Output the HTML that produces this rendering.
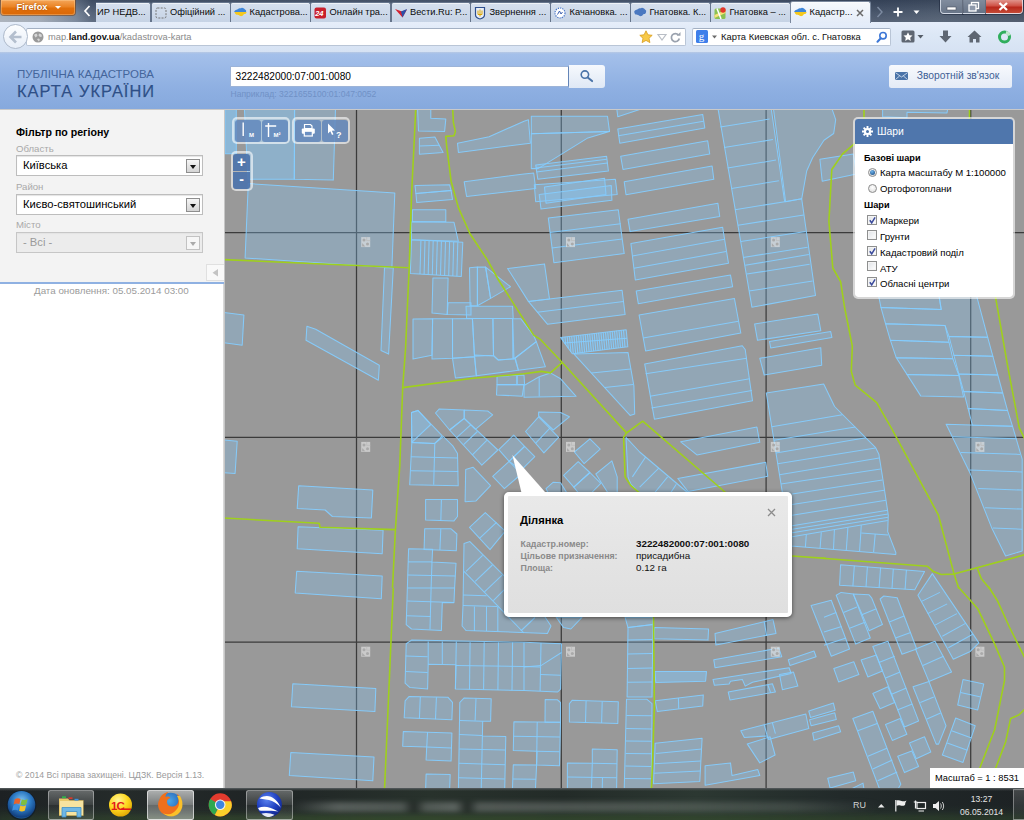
<!DOCTYPE html>
<html lang="uk">
<head>
<meta charset="utf-8">
<title>Публічна кадастрова карта України</title>
<style>
*{box-sizing:border-box;margin:0;padding:0}
html,body{width:1024px;height:820px;overflow:hidden;background:#fff;font-family:"Liberation Sans","DejaVu Sans",sans-serif;font-size:12px;color:#000}
.abs{position:absolute}
/* ---------- browser chrome ---------- */
#titlebar{position:absolute;left:0;top:0;width:1024px;height:22px;background:linear-gradient(90deg,#a2aab5 0,#98a1ae 40px,#6d7c91 76px,#4c5b72 92px,#55647a 30%,#52617a 70%,#3f4d63 86%,#465468 92%,#3c485c 100%)}
#titlebar:before{content:"";position:absolute;left:0;top:0;width:1024px;height:22px;background:linear-gradient(rgba(20,30,50,.25),rgba(255,255,255,.06) 60%,rgba(255,255,255,.12))}
#ffbtn{position:absolute;left:1px;top:0;width:74px;height:14.5px;border-radius:0 0 3px 3px;background:linear-gradient(#f4a558,#ea8426 45%,#e0700c 55%,#db6706);box-shadow:0 0 0 1px rgba(120,60,10,.55),inset 0 0 0 1px rgba(255,220,170,.35);color:#fff;font-weight:bold;font-size:9.3px;line-height:14.5px;padding-left:15.5px;text-shadow:0 0 2px rgba(140,60,0,.8)}
#ffbtn:after{content:"";position:absolute;left:53.5px;top:6px;border:3px solid transparent;border-top:3.5px solid #fff;border-bottom:none}
.tab{position:absolute;top:2px;width:80.5px;height:20px;background:linear-gradient(#d6e0ee,#c6d3e5);border:1px solid #66758c;border-bottom:none;border-radius:2.5px 2.5px 0 0;font-size:9.3px;line-height:18.5px;white-space:nowrap;overflow:hidden;color:#0a0a0a;padding-left:18.500px;box-shadow:inset 0 1px 0 rgba(255,255,255,.6)}
.tab.act{background:linear-gradient(#f6f9fd,#e4ecf8);top:1px;height:22px;z-index:2;border-color:#7a889d;line-height:20px}
.tab svg{position:absolute;left:3px;top:3.5px}
.tab.act svg{top:4.5px}
#navbar{position:absolute;left:0;top:22px;width:1024px;height:30px;background:linear-gradient(#e6eefa,#dde8f6 40%,#d6e2f3)}
#urlbox{position:absolute;left:26px;top:5.5px;width:659.5px;height:18.5px;background:#fff;border:1px solid #b9c5d6;border-top-color:#a3b0c3;border-radius:2px;font-size:9.3px;line-height:16.5px;padding-left:21px;color:#8a8a8a;white-space:nowrap}
#urlbox b{color:#111;font-weight:bold}
#srchbox{position:absolute;left:691.5px;top:5.5px;width:199px;height:18.5px;background:#fff;border:1px solid #b9c5d6;border-top-color:#a3b0c3;border-radius:2px;font-size:9.4px;line-height:16.5px;padding-left:28.5px;color:#111;white-space:nowrap}
#backbtn{position:absolute;left:3px;top:2px;width:25px;height:25px;border-radius:50%;background:linear-gradient(#fdfeff,#e7eef8);border:1px solid #aebacb;z-index:2}
.wc{position:absolute;top:0;height:13.5px;border:1px solid rgba(235,240,250,.75);border-top:none;box-shadow:0 0 0 1px rgba(30,40,60,.6)}
/* ---------- page header ---------- */
#hdr{position:absolute;left:0;top:52px;width:1024px;height:58px;background:linear-gradient(#b7c9e4 0,#a4c0ea 2px,#8fb0e2 60%,#86a9dd 56.5px,#c9c9c9 57px)}
#t1{position:absolute;left:17px;top:16.5px;font-size:11.5px;line-height:1;color:#44659b;white-space:nowrap}
#t2{position:absolute;left:17px;top:30.5px;font-size:16.4px;line-height:1;color:#2d4f88;letter-spacing:1.05px;-webkit-text-stroke:.25px #2d4f88;white-space:nowrap;text-shadow:0 1px 0 rgba(255,255,255,.25)}
#q{position:absolute;left:230px;top:13.5px;width:339px;height:21.5px;background:#fff;border:1px solid #9db4d8;border-right-color:#6485b8;font-size:10.15px;line-height:19.5px;padding-left:4.5px;color:#000}
#qb{position:absolute;left:569px;top:13px;width:36px;height:22.5px;background:linear-gradient(#f6f9fd,#dfe8f5);border-radius:0 3px 3px 0}
#ex{position:absolute;left:230.5px;top:38px;font-size:8.55px;line-height:1;color:#7091c6;white-space:nowrap}
#fb{position:absolute;left:888.5px;top:13px;width:123.5px;height:22.5px;background:linear-gradient(#f7f9fd,#e4ebf6);border-radius:2.5px;font-size:10.3px;line-height:22px;color:#3f5f95;padding-left:28.3px;white-space:nowrap}
/* ---------- left panel ---------- */
#left{position:absolute;left:0;top:110px;width:224px;height:172px;background:#f3f3f3}
#leftline{position:absolute;left:0;top:282px;width:224px;height:2px;background:#8fb1e2}
.lbl{position:absolute;left:16px;font-size:9.6px;color:#a9a9a9}
.sel{position:absolute;left:16px;width:187px;height:21px;background:#fff;border:1px solid #bdbdbd;box-shadow:inset 0 1px 1px #e4e4e4;font-size:11.2px;line-height:19px;padding-left:6px;color:#000;white-space:nowrap}
.sel u{position:absolute;right:2px;top:3px;width:14px;height:14px;border:1px solid #8e8e8e;background:linear-gradient(#f6f6f6,#d4d4d4);display:block}
.sel u:after{content:"";position:absolute;left:3px;top:5px;border:3px solid transparent;border-top:4px solid #111;border-bottom:none}
.sel.dis{background:#ececec;color:#9a9a9a;border-color:#c6c6c6}
.sel.dis u{border-color:#c2c2c2;background:#f6f6f6}
.sel.dis u:after{border-top-color:#aaa}
/* ---------- map ---------- */
#map{position:absolute;left:224px;top:110px;width:800px;height:678px;background:#999;overflow:hidden}
.pc polygon{fill:rgba(133,200,250,.30);stroke:#84cdff;stroke-width:1.05;stroke-opacity:.92;stroke-linejoin:round}
.pc polygon.nf{stroke:none}
.pl polyline{fill:none;stroke:#84cdff;stroke-width:1.05;stroke-opacity:.92}
.gl polyline{fill:none;stroke:#9fd01c;stroke-width:1.6;stroke-linejoin:round}

/* ---------- overlays ---------- */
.tbg{position:absolute;border:2px solid rgba(255,255,255,.45);border-radius:5px;background:rgba(255,255,255,.28)}
.tb{position:absolute;background:rgba(88,128,184,.78);border-radius:3px}
.zb{position:absolute;background:rgba(70,110,170,.88);color:#fff;text-align:center;font-weight:bold}
#layers{position:absolute;left:853px;top:117px;width:162px;height:182px;border:2px solid rgba(255,255,255,.6);border-radius:5px;background:#fff;background-clip:padding-box;font-size:9.6px}
#layers .h{position:absolute;left:0;top:0;width:158px;height:25px;background:rgba(66,108,166,.93);border-radius:3px 3px 0 0;color:#fff;font-size:10.4px;line-height:25px;padding-left:22px}
#layers b{position:absolute;left:9px;font-size:9.2px}
#layers span{position:absolute;left:25px;white-space:nowrap}
#layers .r{position:absolute;left:13px;width:9px;height:9px;border-radius:50%;border:1px solid #8d8d8d;background:radial-gradient(circle at 50% 35%,#fff,#d9d9d9)}
#layers .r.on:after{content:"";position:absolute;left:1px;top:1px;width:5px;height:5px;border-radius:50%;background:radial-gradient(circle at 40% 30%,#6fb3ea,#12457e)}
#layers .c{position:absolute;left:12px;width:10px;height:10px;border:1px solid #8e8f8f;background:linear-gradient(135deg,#dfe2e6,#fff);box-shadow:inset 0 0 0 1px #f4f4f4}
#layers .c svg{position:absolute;left:0;top:0}
#popup{position:absolute;left:504px;top:492px;width:288px;height:125px;border:4px solid #fff;border-radius:5px;background:linear-gradient(#e9e9e9,#dfdfdf);box-shadow:0 1px 4px rgba(0,0,0,.55)}
#popup .t{position:absolute;left:12px;top:17.700px;font-weight:bold;font-size:11.2px;white-space:nowrap}
#popup .k{position:absolute;left:12.5px;font-weight:bold;font-size:8.8px;color:#8a8a8a;white-space:nowrap}
#popup .v{position:absolute;left:128px;font-size:9.8px;color:#111;white-space:nowrap}
#scale{position:absolute;left:930px;top:768px;width:94px;height:20px;background:#fff;font-size:9.3px;line-height:20px;padding-left:5px;white-space:nowrap}
/* ---------- taskbar ---------- */
#taskbar{position:absolute;left:0;top:788px;width:1024px;height:32px;background:linear-gradient(rgba(90,96,98,.55),rgba(30,34,36,0) 2px),linear-gradient(90deg,#1d2123 0,#252b2a 12%,#1f2425 25%,#28322c 42%,#232b28 55%,#2c3832 68%,#222a2a 82%,#1d2224 100%);border-top:1px solid #4e5456;overflow:hidden;font-size:8.6px;color:#e4e4e4}
#taskbar:before{content:"";position:absolute;left:0;top:16px;width:1024px;height:16px;background:linear-gradient(rgba(40,60,44,0),rgba(44,64,46,.55))}
.tbtn{position:absolute;top:1px;height:29.500px;width:46.500px;border:1px solid rgba(255,255,255,.38);border-radius:2.500px;background:linear-gradient(rgba(255,255,255,.30),rgba(255,255,255,.13) 48%,rgba(255,255,255,.05) 52%,rgba(255,255,255,.12))}
.tbtn.on{background:linear-gradient(rgba(255,255,255,.62),rgba(255,255,255,.40) 48%,rgba(255,255,255,.30) 52%,rgba(255,255,255,.42));border-color:rgba(255,255,255,.6)}
</style>
</head>
<body>
<!-- browser -->
<div id="titlebar">
  <div id="ffbtn">Firefox</div>
  <svg class="abs" style="left:83px;top:5px;z-index:4" width="8" height="12" viewBox="0 0 8 12"><path d="M6.500 1l-4.500 5 4.500 5" fill="none" stroke="#fff" stroke-width="1.700"/></svg>
  <div class="tab" style="left:96px;width:54.500px;padding-left:1px;border-left:none;border-radius:0 2.500px 0 0">ИР НЕДВ...</div>
  <div class="tab" style="left:150.5px"><svg width="13" height="13" viewBox="0 0 13 13"><rect x="1" y="1" width="10" height="10" rx="1.500" fill="none" stroke="#777" stroke-width="1" stroke-dasharray="2 1.200"/></svg>Офіційний ...</div>
  <div class="tab" style="left:230px"><svg width="13" height="13" viewBox="0 0 13 13"><path d="M1 3.500c1-1 2-.5 3-1.500s2.500-.5 3.500-1 2.500.5 3.500 1.500 1.500 1 1 2.500h-12z" fill="#3f86d8"/><path d="M0.500 5h12c0 1.500-1 2-2 2s-1 1.500-2.500 2-2.500-.5-3.500-1-2.500 0-3-1-1-1.500-1-2z" fill="#f4c81e"/></svg>Кадастрова...</div>
  <div class="tab" style="left:310px"><svg width="13" height="13" viewBox="0 0 13 13"><rect x=".5" y=".5" width="11.500" height="11" rx="2" fill="#c9202c"/><text x="1.200" y="9" font-family="Liberation Sans,sans-serif" font-size="7.500" font-weight="bold" font-style="italic" fill="#fff">24</text></svg>Онлайн тра...</div>
  <div class="tab" style="left:390.5px"><svg width="13" height="13" viewBox="0 0 13 13"><path d="M0 2l7 2.500 5-2-4.500 8z" fill="#d32030"/><path d="M6 4.500l6-2.500-4.500 8.500z" fill="#2b4fa8"/></svg>Вести.Ru: Р...</div>
  <div class="tab" style="left:470px"><svg width="13" height="13" viewBox="0 0 13 13"><path d="M1.500.5h9v7.500c0 2-2.500 3.500-4.500 4-2-.5-4.500-2-4.500-4z" fill="#e9eef6" stroke="#2e4f8f" stroke-width="1.200"/><path d="M6 2.500v7M4 3.500v4h4v-4" fill="none" stroke="#d9a400" stroke-width="1"/></svg>Звернення ...</div>
  <div class="tab" style="left:550px"><svg width="13" height="13" viewBox="0 0 13 13"><circle cx="6" cy="6" r="5" fill="#fff" stroke="#4c78c8" stroke-width="1.200" stroke-dasharray="1.300 1"/><path d="M3.500 7.500l2-3.500 1.500 3 1.500-2" fill="none" stroke="#3b5fb0" stroke-width="1"/></svg>Качановка. ...</div>
  <div class="tab" style="left:630px"><svg width="13" height="13" viewBox="0 0 13 13"><path d="M1 3.500c1-1 2-.5 3-1.500s2.500-.5 3.500-1 2.500.5 3.500 1.500 1.500 1 1 2.500 c0 1.500-1 2-2 2s-1 1.500-2.500 2-2.500-.5-3.500-1-2.500 0-3-1-1.500-2.500 0-3.500z" fill="#4a78c0"/></svg>Гнатовка. К...</div>
  <div class="tab" style="left:710px"><svg width="13" height="13" viewBox="0 0 13 13"><rect x=".5" y="1.500" width="11" height="10.500" rx="1.500" fill="#8cc152"/><path d="M.5 8l11-5v3l-11 5z" fill="#f7e27a"/><path d="M3 1.500l4 10.500" stroke="#fff" stroke-width="1.500"/><circle cx="9" cy="3" r="2.700" fill="#e2362b"/></svg>Гнатовка – ...</div>
  <div class="tab act" style="left:790px"><svg width="13" height="13" viewBox="0 0 13 13"><path d="M1 3.500c1-1 2-.5 3-1.500s2.500-.5 3.500-1 2.500.5 3.500 1.500 1.500 1 1 2.500h-12z" fill="#3f86d8"/><path d="M0.500 5h12c0 1.500-1 2-2 2s-1 1.500-2.500 2-2.500-.5-3.500-1-2.500 0-3-1-1-1.500-1-2z" fill="#f4c81e"/></svg>Кадастр...<svg style="left:65px;top:6.500px" width="8" height="8" viewBox="0 0 8 8"><path d="M1 1l6 6M7 1l-6 6" stroke="#6a6a6a" stroke-width="1.500"/></svg></div>
  <svg class="abs" style="left:876px;top:6px" width="50" height="12" viewBox="0 0 50 12"><path d="M1.500 1l4.500 5-4.500 5" fill="none" stroke="#7d8ba1" stroke-width="1.400"/><path d="M22 1.500v9M17.500 6h9" stroke="#fff" stroke-width="1.800"/><path d="M37.500 4.500h6l-3 3.500z" fill="#fff"/></svg>
  <div class="wc" style="left:940px;width:23px;background:linear-gradient(rgba(190,200,215,.55),rgba(130,142,160,.5));border-radius:0 0 0 4px"><svg width="21" height="13" viewBox="0 0 21 13"><rect x="6" y="7" width="9" height="3" fill="#fff" stroke="#4a5260" stroke-width=".6"/></svg></div>
  <div class="wc" style="left:963px;width:23px;background:linear-gradient(rgba(190,200,215,.55),rgba(130,142,160,.5));border-left:none"><svg width="21" height="13" viewBox="0 0 21 13"><rect x="8.500" y="2.500" width="7" height="6" fill="none" stroke="#fff" stroke-width="1.300"/><rect x="6" y="5" width="7" height="6" fill="#8e99ab" stroke="#fff" stroke-width="1.300"/></svg></div>
  <div class="wc" style="left:986px;width:36.500px;background:linear-gradient(#e0938b,#cf5246 45%,#b8281c 55%,#c44a36);border-left:none;border-radius:0 0 4px 0"><svg width="35" height="13" viewBox="0 0 35 13"><path d="M13.500 3l7.500 7M21 3l-7.500 7" stroke="#fff" stroke-width="2.300"/></svg></div>
</div>
<div id="navbar">
  <div id="backbtn"><svg style="position:absolute;left:.5px;top:.5px" width="22" height="22" viewBox="0 0 22 22"><path d="M16.500 11h-10M11 5.500l-5.500 5.500 5.500 5.500" fill="none" stroke="#b4bfce" stroke-width="2.600"/></svg></div>
  <div id="urlbox"><svg class="abs" style="left:4.500px;top:2.500px" width="12" height="12" viewBox="0 0 12 12"><circle cx="6" cy="6" r="5.500" fill="#9a9a9a"/><path d="M2 4c1-1 2-1.500 3-1l.5 2-2 1.500zM7 2.500l2.500 1 .5 2-2 .5-1.500-1.500zM5 8l2-.5 1 1.500-1.500 1.500z" fill="#d6d6d6"/></svg>map.<b>land.gov.ua</b>/kadastrova-karta
    <svg class="abs" style="left:612px;top:1.500px" width="46" height="14" viewBox="0 0 46 14"><path d="M7 .8l1.900 4 4.300.5-3.200 3 .9 4.300-3.900-2.200-3.900 2.200.9-4.300-3.200-3 4.300-.5z" fill="#f7c948" stroke="#d89c1a" stroke-width=".8"/><path d="M19 4.500h8l-4 5.500z" fill="none" stroke="#b9bec6" stroke-width="1.200"/><path d="M39.500 5a4 4 0 1 0 .8 3.500" fill="none" stroke="#9aa2ae" stroke-width="1.700"/><path d="M41.500 2v3.800h-3.800z" fill="#9aa2ae"/></svg>
  </div>
  <div id="srchbox"><svg class="abs" style="left:3.500px;top:1.500px" width="24" height="14" viewBox="0 0 24 14"><rect width="12" height="13" rx="1.500" fill="#3f7fea"/><text x="2.800" y="10.300" font-family="Liberation Serif,serif" font-size="11" fill="#fff">g</text><path d="M16 5.500h5l-2.500 3z" fill="#6b6b6b"/></svg>Карта Киевская обл. с. Гнатовка<svg class="abs" style="left:183px;top:2px" width="12" height="12" viewBox="0 0 12 12"><circle cx="7" cy="4.700" r="3.200" fill="none" stroke="#3d77d6" stroke-width="1.600"/><path d="M4.800 7.200l-3.300 3.500" stroke="#3d77d6" stroke-width="2" stroke-linecap="round"/></svg></div>
  <svg class="abs" style="left:898px;top:7px" width="120" height="16" viewBox="0 0 120 16"><rect x="3.500" y="1.500" width="13" height="12" rx="1.500" fill="#5e6672"/><path d="M10 3.300l1.400 2.900 3.100.4-2.300 2.200.6 3.100-2.800-1.600-2.800 1.600.6-3.100-2.300-2.200 3.100-.4z" fill="#fff"/><path d="M19.500 6h6l-3 3.500z" fill="#555d68"/><path d="M45 1.500h5v5.500h3.500l-6 6.500-6-6.500h3.500z" fill="#5e6672"/><path d="M76.500 1.500l7 6.500h-2v5.500h-3.500v-3.500h-3v3.500h-3.500v-5.500h-2z" fill="#5e6672"/><circle cx="106.500" cy="8" r="5" fill="none" stroke="#2fae5c" stroke-width="3"/><path d="M108 3.200a5 5 0 0 1 3.300 3.300" fill="none" stroke="#bfe8cc" stroke-width="3"/></svg>
</div>
<!-- header -->
<div id="hdr">
  <div id="t1">ПУБЛІЧНА КАДАСТРОВА</div>
  <div id="t2">КАРТА УКРАЇНИ</div>
  <div id="q">3222482000:07:001:0080</div>
  <div id="qb"><svg width="36" height="22" viewBox="0 0 36 22"><circle cx="15.900" cy="9.600" r="3.700" fill="none" stroke="#4a73a8" stroke-width="1.600"/><path d="M18.700 12.400l4.400 3.700" stroke="#4a73a8" stroke-width="2" stroke-linecap="round"/></svg></div>
  <div id="ex">Наприклад: 3221655100:01:047:0052</div>
  <div id="fb"><svg class="abs" style="left:6.5px;top:7px" width="13" height="8" viewBox="0 0 13 8"><rect width="13" height="8" rx=".8" fill="#4a73a8"/><path d="M.5.700l6 4.300 6-4.300M.5 7.500l4.200-3.600M12.500 7.500l-4.200-3.600" fill="none" stroke="#dfe8f5" stroke-width=".8"/></svg>Зворотній зв'язок</div>
</div>
<!-- left -->
<div id="left">
 <div class="abs" style="left:16px;top:15.5px;font-weight:bold;font-size:10.6px;white-space:nowrap">Фільтр по регіону</div>
 <div class="lbl" style="top:32.5px">Область</div>
 <div class="sel" style="top:45px">Київська<u></u></div>
 <div class="lbl" style="top:70.5px">Район</div>
 <div class="sel" style="top:84px">Києво-святошинський<u></u></div>
 <div class="lbl" style="top:109px">Місто</div>
 <div class="sel dis" style="top:122px">- Всі -<u></u></div>
 <div class="abs" style="left:206px;top:154px;width:18px;height:17px;background:#f9f9f9;border:1px solid #e0e0e0;border-right:none"><svg width="17" height="15" viewBox="0 0 17 15"><path d="M11 4v7.500l-5.500-3.750z" fill="#c4c4c4"/></svg></div>
</div>
<div id="leftline"></div>
<div class="abs" style="left:0;top:284px;width:224px;height:504px;border-right:1px solid #d8d8d8;background:#fff"></div>
<div class="abs" style="left:34px;top:285px;font-size:9.8px;color:#9b9b9b;white-space:nowrap">Дата оновлення: 05.05.2014 03:00</div>
<div class="abs" style="left:16px;top:769.500px;font-size:8.7px;color:#9b9b9b;white-space:nowrap">© 2014 Всі права захищені. ЦДЗК. Версія 1.13.</div>
<!-- map -->
<div id="map">
<svg id="mapsvg" class="abs" style="left:0;top:0" width="800" height="678" viewBox="224 110 800 678">
<g id="grid" stroke="#2a2a2a" stroke-width="1.25" fill="none" opacity=".85">
<path d="M356.5 110V788M561.3 110V788M766.1 110V788M970.7 110V788M224 232.5H1024M224 437.3H1024M224 642.1H1024"/>
</g>
<!--MAPSTART-->
<g class="pc">
<polygon class="nf" points="224.9,105.1 236.3,105.1 236.3,153.7 224.9,153.7"/>
<polygon class="nf" points="224.9,105.1 236.3,105.1 236.3,153.7 224.9,153.7"/>
<polygon points="224.9,105.1 236.3,105.1 236.3,153.7 224.9,153.7"/>
<polygon class="nf" points="244.2,105.1 294.6,105.1 294.3,179.2 248,179.2"/>
<polygon points="244.2,105.1 294.6,105.1 294.3,179.2 248,179.2"/>
<polygon points="294.6,105.1 335.6,105.1 333.3,180.1 294.3,179.2"/>
<polygon points="248.3,183.6 394.8,193 391.9,267.7 245.1,258"/>
<polygon points="384.5,267.7 393.3,267.7 388.6,354.1 381,350.6"/>
<polygon points="417.4,105.1 430.8,105.1 430.8,118.3 445.8,119.1 444.6,131.4 418.5,130.9"/>
<polygon points="419.4,138.2 434.9,137 443.1,152.5 419.4,154.3"/>
<polygon points="457.5,143.2 489.1,136.7 524,121.2 528.4,119.7 530.4,143.2 458.4,152.5"/>
<polygon points="464.2,181.8 524,173.9 533.7,173 535.7,188.6 466.6,196.5"/>
<polygon points="415,185.6 449.6,184.8 451.1,190.6 415.9,193.5"/>
<polygon points="415.9,193.5 451.1,190.6 452.5,199.4 416.8,202.6"/>
<polygon points="412.4,209.7 445.8,209.7 445.8,221.7 412.4,221.7"/>
<polygon points="411.5,221.7 454,222.3 458.4,241.3 411.5,239.8"/>
<polygon points="411.5,239.8 462.8,242.2 461.3,276.5 410.3,273.5"/>
<polygon points="432.9,277.9 448.1,277.9 447.2,314.5 432,313.1"/>
<polygon points="448.1,302.8 471,302.8 471,315.1 447.2,314.5"/>
<polygon points="469.5,267.7 477.4,267.1 477.4,305.8 470.1,305.8"/>
<polygon points="477.4,267.1 485.6,267.1 490.6,298.4 477.4,305.8"/>
<polygon points="485.6,267.1 510.5,286.7 490.6,298.4"/>
<polygon points="466,306.3 512.6,306.3 513.2,318.4 466.6,318.4"/>
<polygon points="221.1,312.2 243.9,315.1 242.2,345.3 221.1,342.4"/>
<polygon points="306.9,326.3 315.7,329.2 379.3,365.2 378.4,380.2 306,340.3"/>
<polygon points="531.3,116.2 607.5,116.2 609.5,131.4 531.3,133.8"/>
<polygon points="531.3,133.8 609.5,131.4 587.9,137.9 538.1,168.6 531.3,168.6"/>
<polygon points="535.7,165.1 606.6,156.3 608.4,171 537.8,179.2"/>
<polygon points="534.3,184.8 615.4,179.2 617.2,194.4 535.7,201.8"/>
<polygon points="544.5,187.1 604.6,178.3 606,194.4 546,203.2"/>
<polygon points="539.2,194.4 611.3,185.6 611.9,200.3 541,209.1"/>
<polygon points="548.3,217.9 618.3,209.7 624.2,253.6 553.9,262.7"/>
<polygon points="507.6,268.5 544.5,263.9 549.5,299 528.4,301.4"/>
<polygon points="528.4,301.4 622.1,290.2 625.1,314.5 547.4,324.2"/>
<polygon points="616.3,105.1 652.9,105.1 617.8,116.8"/>
<polygon points="617.8,129.1 702.7,114.4 704.8,127.9 619.8,143.2"/>
<polygon points="620.7,156.3 707.7,140.8 709.7,154 623,169.5"/>
<polygon points="624.2,181.8 712.1,166 713.8,179.2 626,194.7"/>
<polygon points="628,219.3 717.9,203.2 719.7,216.4 630.1,231.6"/>
<polygon points="630.9,243.6 722.6,227.2 728.5,263.3 635.3,280"/>
<polygon points="636.2,291.1 730.5,275 732.6,286.7 638.3,303.7"/>
<polygon points="639.1,315.1 734.4,298.4 740.8,333 645.6,350.9"/>
<polygon points="717.4,105.1 770.7,105.1 784.7,201.8 801.7,198.8 815.5,295.5 751.9,307.2"/>
<polygon points="773,105.1 830.7,105.1 835.7,119.7 833.7,133.5 824,140.2 812.6,157.8 806.7,171 801.7,198.8 785.6,201.8"/>
<polygon points="819.9,159.3 853.3,154 856.5,173.9 822.2,181.2"/>
<polygon points="754.6,323.9 817.8,314 820.8,330.7 757.5,340.3"/>
<polygon points="769.5,341.5 830.7,331.5 831.9,337.4 770.7,347.9"/>
<polygon points="882.6,107 948,107 947,112.9 907,112.3 907,117.8 882.6,116.8"/>
<polygon points="877.7,291.4 938.3,291.4 941.2,309.4 881,307.6"/>
<polygon points="881,307.6 941.2,309.4 938.3,291.4 975.4,291.4 987.7,337.3 949,336.4 945.1,325.6 885.5,323.7"/>
<polygon points="885.5,323.7 945.1,325.6 949,342.2 890.4,340.3"/>
<polygon points="890.4,340.3 949,342.2 952.9,358.8 896.3,357.8"/>
<polygon points="896.3,357.8 952.9,358.8 958.8,375.4 907,374.4"/>
<polygon points="907,374.4 958.8,375.4 963.6,396.9 920.7,395.9"/>
<polygon points="949,336.4 987.7,337.3 992.9,356.3 953.9,355.3"/>
<polygon points="953.9,355.3 992.9,356.3 997.8,375 958.8,373.9"/>
<polygon points="958.8,373.9 997.8,375 1002.7,393 963.6,391.4"/>
<polygon points="963.6,391.4 1002.7,393 1007.6,410.6 968.1,408.6"/>
<polygon points="968.1,408.6 1007.6,410.6 1012.5,426.2 972.4,425.2"/>
<polygon points="413,319 432.6,318.7 432,355.3 413,359.1"/>
<polygon points="432.6,318.7 452.5,318.7 452.5,358.3 432,359.1"/>
<polygon points="452.5,318.7 472.4,318.4 474.5,356.8 452.5,358.3"/>
<polygon points="452.5,358.3 474.5,356.8 476.5,375.8 455.4,377.9"/>
<polygon points="472.4,318.4 492.9,318.4 493.5,355.3 474.5,356.2"/>
<polygon points="492.9,318.4 512.6,318.4 514,359.1 497.9,359.7 493.5,355.3"/>
<polygon points="474.5,355 493.5,355.9 498.5,360.3 514.9,358.5 518.4,370.3 476.2,375.8"/>
<polygon points="512.6,318.7 520.8,318.7 534,336.3 536.3,341.6 515.2,358 512.9,358"/>
<polygon points="515.2,358 536.3,341.6 545.4,366.8 518.4,370.3"/>
<polygon points="497,376.4 517,375.2 517,384.6 497,384.6"/>
<polygon points="517,375.2 524,375 524.6,384.6 517,384.6"/>
<polygon points="497,384.6 524,384.6 522.2,396.3 496.5,394.9"/>
<polygon points="411.5,412.5 417.9,410.4 442.3,435.9 434.6,443.5 411.8,442.6"/>
<polygon points="411.5,412.5 417.9,410.4 430.8,424.5 411.8,442.3"/>
<polygon points="411.8,442.6 434.6,443.5 443.4,436.5 452.8,445.9 457.5,453.5 458.2,485.7 409.7,484.8"/>
<polygon points="435.5,413 439.3,408.9 464.2,410.1 464.2,418.3 449.6,430"/>
<polygon points="464.2,410.1 487.7,411 492.7,414.8 475.4,429.4 464.2,418.3"/>
<polygon points="449.6,430 464.2,418.3 497.9,450 481.8,465.2"/>
<polygon points="498.8,449.7 513.7,435 524.6,446.4 509.1,461.4"/>
<polygon points="509.1,461.4 524.6,446.4 534.8,456.7 521.4,469.9"/>
<polygon points="492.7,476.3 509.1,461.4 521.4,474 504.4,488.6"/>
<polygon points="465.7,469.6 473,467.2 490.6,485.7 476,500.9 465.1,501.8"/>
<polygon points="425.6,499.5 457.5,499.5 457.5,516.5 454,520.9 425.6,520"/>
<polygon points="424.7,528.8 451.1,528.8 456.9,534 456.3,550.7 424.1,549.6"/>
<polygon points="408.6,548.7 432.6,549.3 432,561.9 456,563.3 454.6,587.9 454,602.6 442.3,602.6 441.4,630.4 411.5,629 406.2,624.6"/>
<polygon points="469.5,527.3 485.3,512.6 505.2,531.1 490,549.6"/>
<polygon points="221.1,439.7 237.2,441.2 235.1,473.4 221.1,472.5"/>
<polygon points="298.7,485.7 372.8,490.1 371.4,517.9 332.4,516.5 325.1,510 297.2,508.5"/>
<polygon points="298.1,526.7 383.1,530.2 382.2,553.7 297.2,548.7"/>
<polygon points="296.7,571.2 382.2,575.9 381.3,598.8 295.2,592.9"/>
<polygon points="524,385.5 539.2,376.7 550.4,372.9 560.6,378.8 576.1,396.3 524,397.2"/>
<polygon points="573.8,353.9 628,352.4 633.9,386.1 634.7,413.9 630.1,415.4"/>
<polygon points="644.7,364.1 742.3,345.7 745.2,349.5 752.5,400.7 654.4,419.2"/>
<polygon points="759.8,358.3 820.8,347.7 821.7,365.3 764.2,375"/>
<polygon points="680.7,441.8 756.9,427.1 759.8,442.3 696.9,454.9"/>
<polygon points="677.8,478.4 765.7,462.3 767.8,476.3 688.1,491.6"/>
<polygon points="626,437.4 639.7,452 688.1,493 639.7,493 630.9,484.2 628,476.9"/>
<polygon points="538.6,411.9 560.6,412.5 569.4,416.8 553.3,430 538.6,416"/>
<polygon points="525.5,431.5 538.6,416.8 558.6,437.4 543.9,452.9"/>
<polygon points="574.4,452 589.9,438.8 600.2,449.1 584.1,463.7"/>
<polygon points="563.6,475.4 578.2,461.7 589.9,472.5 573.8,487.2"/>
<polygon points="573.8,487.2 589.9,472.5 600.8,483.4 589.9,494.5 579.7,494.5"/>
<polygon points="595.8,474 611.9,460.8 617.2,476.9 617.2,494.5 609,494.5"/>
<polygon points="546,488.6 553.3,482.2 560.6,482.8 567.9,494.5 548.9,494.5"/>
<polygon points="560.5,337.4 626.2,329.7 627.8,346.8 572.3,353.8"/>
<polygon points="464,543.4 469.9,541.6 545,617 551,626 547.4,633.4 521.7,632.4 466,630.5 462.1,626 463,605.5"/>
<polygon points="513.9,721.7 560.5,722.3 559.5,765.7 536.6,765.1 537,751.3 513.3,750.6"/>
<polygon points="513.3,764.7 536.6,765.1 535.4,790 512.4,790"/>
<polygon points="545.2,699.6 557.5,699.8 560.5,702.5 560.5,722.3 545,722.3"/>
<polygon points="766.3,393 823.7,384 834.6,406.5 875.4,447.3 878.9,454.3 883,480 888.3,515.2 887.7,531.6 895.9,552.7 895.7,554.6 791,546.1"/>
<polygon points="946.1,424.3 1012.5,426.2 1022.2,459.2 1022.2,551 1005.6,555.9 992,528.6 969.5,471.9 948,428"/>
<polygon points="840.6,564.7 924.6,571.6 914.8,589.7 839.6,585.2"/>
<polygon points="292.8,683.8 375.8,688.5 374.9,711.6 291.4,706.7"/>
<polygon points="290.8,752.6 374,757 372.8,780.8 289.3,775.5"/>
<polygon points="406.2,643.7 411.5,640.1 524,642.2 561.5,643.7 560.6,689.1 557.7,692 524,690.5 455.4,689.1 456,664.8 428.2,664.2 427.6,689.1 410,687.6 405.1,683.2"/>
<polygon points="405.1,700.8 409.2,696.4 448.1,697.3 452.5,702.3 451.9,719.8 404.2,717.8"/>
<polygon points="403.3,731.6 451.9,733 451.1,760.9 426.1,760 426.7,747.1 402.7,746.2"/>
<polygon points="459.8,702.3 464.2,697.9 491.2,698.7 490.6,721.3 482.7,721.3 482.4,735.9 505.8,736.5 504.7,790.1 458.4,790.1"/>
<polygon points="426.1,774 450.2,774.6 449.6,790.1 425.6,790.1"/>
<polygon points="556.2,617.3 582,617.3 570.9,629 563.6,627.6"/>
<polygon points="569.4,703.7 572.3,700.2 618.3,701.7 617.8,723.4 569.4,721.9"/>
<polygon points="592.3,749.1 617.2,749.7 616.6,790.1 567.4,790.1 567.4,762.9 592.3,763.2"/>
<polygon points="625.1,617.3 652.9,617.3 652.9,624.6 628,627.6"/>
<polygon points="628,627.6 652.9,624.6 652,697 627.1,697"/>
<polygon points="626.5,699.3 647,699.3 652,703.7 651.4,790.1 624.2,790.1"/>
<polygon points="654.4,627.6 708.6,629 708,640.1 654.4,638.7"/>
<polygon class="nf" points="655,671.5 706.5,671.5 705.6,681.2 655.8,682.6"/>
<polygon points="655,671.5 706.5,671.5 705.6,681.2 655.8,682.6"/>
<polygon points="655.2,700.8 703.3,694.9 702.7,706.1 657.3,711.6"/>
<polygon points="655.2,743.3 702.1,738.3 699.8,781.4 653.5,783.7"/>
<polygon points="715,633.4 773,619.6 776,633.4 715.9,645.1"/>
<polygon points="713.8,659.8 778.9,648.1 781.8,656.8 715,667.7"/>
<polygon points="713,679.4 789.1,667.7 791.2,673.5 752.5,682.3 745.2,686.1 742.3,679.4 730.5,681.2 729.1,684.1 714.4,685.3"/>
<polygon points="779.5,674.4 793.5,672.1 797.9,686.1 782.4,689.7"/>
<polygon points="728.2,692 772.4,683.8 775.4,692 730,699.9"/>
<polygon points="788.3,659.8 814,651 816.1,656.8 790,665.6"/>
<polygon points="740.8,730.7 805.8,714 808.8,728.6 768.6,739.5 767.2,735.9 744.3,737.4"/>
<polygon points="747.2,743.9 770.1,736.8 775.1,755 759.8,762.9"/>
<polygon points="808.8,711 833.4,703.1 835.1,710.2 810.5,717.5"/>
<polygon points="809.6,719.8 834.8,712.8 836.3,719.5 811.1,725.7"/>
<polygon points="812.6,733 838.6,725.7 840.7,731.8 814,740.3"/>
<polygon points="705.1,765.8 730.5,762.9 732,775.5 757.8,769.6 759.8,775.5 705.1,785.2"/>
<polygon points="811.1,605.6 831.3,600.2 849.6,649 831.3,656.3 816.9,620.2"/>
<polygon points="836.2,595.3 841.1,592.4 853.3,594.1 870.3,638 855.7,644.1"/>
<polygon points="853.3,594.1 869.1,594.8 871.6,597.8 882.5,624.6 869.1,630.7"/>
<polygon points="880.1,599 883.8,596 897.2,597.8 916.7,649 902,654.3"/>
<polygon points="932.3,573.6 978.9,642.9 970.3,651.4 953.3,659.2 917.9,595.3"/>
<polygon points="915.5,649 935,641.2 951.6,672.1 928.9,681.4"/>
<polygon points="913,686.8 928.9,681.4 946,725.8 938.6,744.1 936.2,744.1"/>
<polygon points="872.8,646.5 887.9,641.2 918.6,720.9 904.5,727"/>
<polygon points="861.1,660 876.4,655.1 882.5,670.9 867.9,677"/>
<polygon points="833.8,668.5 853.8,661.7 858.9,674.6 838.6,681.9"/>
<polygon points="872.8,693.4 887.9,686.8 894.7,702.6 880.1,708.7"/>
<polygon points="885.5,724.6 900.1,718.5 906.9,734.3 892.3,740.4"/>
<polygon points="852.8,718.5 872.8,711.2 900.8,784.3 897.2,790.4 880.1,790.4"/>
<polygon points="909.4,742.9 924.5,736.8 930.8,751.9 916.2,758.7"/>
<polygon points="897.7,756.3 911.8,750.9 918.6,766.5 904.5,772.6"/>
<polygon points="963,679.5 983.8,683.9 977.7,710 957.7,705.1"/>
<polygon points="955.7,718 975.2,725.8 963,762.4 942.3,755.1"/>
<polygon points="827.7,778.2 853.3,772.1 855.7,780.7 830.1,788"/>
<polygon points="848.4,790.4 863,783.1 864.2,790.4"/>
</g>
<g class="pl">
<polyline points="419.4,146.1 439.3,145.2"/>
<polyline points="420.9,240.4 420,274.1"/>
<polyline points="425,240.4 424.1,274.4"/>
<polyline points="429.1,240.7 428.2,274.7"/>
<polyline points="433.2,241 432.3,275"/>
<polyline points="437.3,241 436.4,275"/>
<polyline points="441.4,241.3 440.5,275.3"/>
<polyline points="445.5,241.6 444.6,275.6"/>
<polyline points="449.6,241.6 448.7,275.9"/>
<polyline points="453.7,241.9 452.8,275.9"/>
<polyline points="457.8,242.2 456.9,276.2"/>
<polyline points="535.7,168.1 606.9,159.3"/>
<polyline points="536.3,171.9 607.5,163.1"/>
<polyline points="549.8,232.5 620.7,223.7"/>
<polyline points="551.8,248 622.1,239"/>
<polyline points="537.2,312.2 623.6,301.4"/>
<polyline points="618.3,135.8 703.6,121.2"/>
<polyline points="632.4,255.9 724.7,239.2"/>
<polyline points="633.9,268.3 726.1,251.6"/>
<polyline points="643.2,338 738.5,321.3"/>
<polyline points="720.3,127 769.5,119.1"/>
<polyline points="724.1,147.6 773,139.6"/>
<polyline points="727.6,168.1 776,160.1"/>
<polyline points="731.4,188.6 778.9,180.7"/>
<polyline points="734.9,209.7 784.7,201.8"/>
<polyline points="737.9,225.2 803.8,214.9"/>
<polyline points="740.8,241.6 805.5,231.6"/>
<polyline points="743.1,257.4 807.6,247.2"/>
<polyline points="745.2,265.3 808.8,254.5"/>
<polyline points="746.7,274.1 809.6,264.2"/>
<polyline points="749,291.1 812.6,280.9"/>
<polyline points="434.8,443.5 433.7,484.8"/>
<polyline points="410.9,456.7 457.8,457.9"/>
<polyline points="410.6,470.8 458.2,471.6"/>
<polyline points="456.9,437.4 470.7,424.8"/>
<polyline points="463.6,444.7 477.4,431.5"/>
<polyline points="472.4,454.9 486.8,440.3"/>
<polyline points="441.4,499.5 440.8,520.9"/>
<polyline points="440.8,528.8 439.9,550.1"/>
<polyline points="408,561.9 432,561.9"/>
<polyline points="407.7,575.1 455.4,575.9"/>
<polyline points="432,561.9 431.1,587.9 430,629.5"/>
<polyline points="407.4,587.9 454.9,587.9"/>
<polyline points="407.1,601.1 454,602.6"/>
<polyline points="406.5,615.8 430.5,616.4"/>
<polyline points="479.5,538.4 496.5,522.3"/>
<polyline points="539.2,377.3 539.2,396.6"/>
<polyline points="591.4,372.9 630.9,369.1"/>
<polyline points="604.6,387.6 633,384.6"/>
<polyline points="645.6,373.8 746.7,358.3"/>
<polyline points="650,396.3 749.6,378.8"/>
<polyline points="651.4,408.1 751.9,390.5"/>
<polyline points="632.4,476.9 645.6,457"/>
<polyline points="639.7,487.2 658.8,468.1"/>
<polyline points="654.4,493 667.6,476.9"/>
<polyline points="670.5,493 676.3,484.2"/>
<polyline points="535.7,443.2 550.4,427.7"/>
<polyline points="564.3,343.1 627,338.3"/>
<polyline points="562.7,337.1 563.1,340.9"/>
<polyline points="565,336.9 565.7,344.6"/>
<polyline points="567.2,336.6 568.3,348.2"/>
<polyline points="569.5,336.4 570.9,351.9"/>
<polyline points="571.7,336.1 573.3,353.6"/>
<polyline points="574,335.8 575.6,353.3"/>
<polyline points="576.2,335.6 577.8,353.1"/>
<polyline points="578.5,335.3 580.1,352.8"/>
<polyline points="580.7,335 582.3,352.5"/>
<polyline points="583,334.8 584.6,352.2"/>
<polyline points="585.2,334.5 586.8,351.9"/>
<polyline points="587.5,334.2 589.1,351.6"/>
<polyline points="589.7,334 591.3,351.4"/>
<polyline points="592,333.7 593.6,351.1"/>
<polyline points="594.2,333.5 595.8,350.8"/>
<polyline points="596.5,333.2 598.1,350.5"/>
<polyline points="598.7,332.9 600.3,350.2"/>
<polyline points="601,332.7 602.6,350"/>
<polyline points="603.2,332.4 604.8,349.7"/>
<polyline points="605.5,332.1 607.1,349.3"/>
<polyline points="607.7,331.9 609.3,349.1"/>
<polyline points="610,331.6 611.6,348.8"/>
<polyline points="612.2,331.3 613.8,348.5"/>
<polyline points="614.5,331.1 616.1,348.3"/>
<polyline points="616.7,330.8 618.3,347.9"/>
<polyline points="619,330.5 620.5,347.6"/>
<polyline points="621.2,330.3 622.8,347.4"/>
<polyline points="623.5,330 625,347.1"/>
<polyline points="464,571.3 524,633"/>
<polyline points="520.8,631 535,617.5"/>
<polyline points="466,571.3 482.6,555.3"/>
<polyline points="475.2,581.4 492.4,565"/>
<polyline points="484.5,591.8 502.1,575.2"/>
<polyline points="493.3,600.6 504.1,589.8"/>
<polyline points="463.1,595.1 486.5,595.7"/>
<polyline points="463,605.5 497.2,606.4"/>
<polyline points="474.4,606.4 474.4,630.9"/>
<polyline points="486.5,606.4 486.5,631"/>
<polyline points="497.8,606.4 497.8,631.5"/>
<polyline points="513.6,736.2 559.9,737"/>
<polyline points="537.2,722 536.6,765.1"/>
<polyline points="537,751.3 559.7,751.8"/>
<polyline points="513,779 536,779.3"/>
<polyline points="771.8,426.7 842.4,414.8"/>
<polyline points="774,440.2 855.3,427.1"/>
<polyline points="776,453 866,437.7"/>
<polyline points="777.7,463.8 875.4,447.9"/>
<polyline points="779.5,474.7 879.2,458.1"/>
<polyline points="781,484 880.7,469"/>
<polyline points="792.2,494.1 882.4,480"/>
<polyline points="792.2,504.6 884.2,490.3"/>
<polyline points="792.2,515.2 886,500.2"/>
<polyline points="792.2,525.7 887.7,510.2"/>
<polyline points="792.2,529.2 888,514"/>
<polyline points="792.2,532.7 888,517.3"/>
<polyline points="792.2,536.8 887.7,520.4"/>
<polyline points="806.3,534.5 805.4,547"/>
<polyline points="821.3,532.2 820.1,548"/>
<polyline points="834.4,529.8 833.5,549.1"/>
<polyline points="847.9,527.5 846.3,550"/>
<polyline points="861.3,525.1 859.6,551.1"/>
<polyline points="861.3,533 888,535.1"/>
<polyline points="875.2,534.1 873.6,552.1"/>
<polyline points="952.9,436.8 1016.4,438.7"/>
<polyline points="960.7,452.4 1020.3,454.4"/>
<polyline points="969.5,470 1022.2,471.9"/>
<polyline points="978.3,488.5 1022.2,490.1"/>
<polyline points="985.1,507.7 1022.2,509.1"/>
<polyline points="992.9,528 1022.2,529.2"/>
<polyline points="854.3,565.7 852.9,586.2"/>
<polyline points="867.4,566.7 866,587"/>
<polyline points="880.6,567.6 879.1,587.8"/>
<polyline points="893.3,569 892,588.5"/>
<polyline points="906.4,570 905.1,589.3"/>
<polyline points="428.2,641.6 428.2,664.2"/>
<polyline points="442.3,641.6 442.3,664.2"/>
<polyline points="456.3,641.6 455.4,689.1"/>
<polyline points="470.1,642.2 469.5,689.4"/>
<polyline points="484.2,642.2 483.6,689.7"/>
<polyline points="498.5,642.5 497.9,690"/>
<polyline points="512.6,642.5 512,690.2"/>
<polyline points="524,642.5 524,690.5"/>
<polyline points="541,643.1 540.1,691.1"/>
<polyline points="456,665.6 524,666.5 540.1,667.1"/>
<polyline points="540.1,674.4 560.6,675.3"/>
<polyline points="524,667.1 541,665.6 561.5,652.5"/>
<polyline points="405.6,656 427.6,656.8"/>
<polyline points="405.6,671.5 427.6,672.4"/>
<polyline points="420.3,697 419.4,718.7"/>
<polyline points="436.4,697.3 435.5,719.2"/>
<polyline points="427.6,732.1 426.7,747.1"/>
<polyline points="426.7,747.1 451.6,748"/>
<polyline points="476,698.4 475.1,720.4"/>
<polyline points="459.8,720.4 482.7,721.3"/>
<polyline points="459.3,734.5 482.4,735.4"/>
<polyline points="459.3,749.1 505.2,750"/>
<polyline points="459,763.2 505.2,764.7"/>
<polyline points="458.4,777.8 504.7,779"/>
<polyline points="482.4,735.9 481.2,790.1"/>
<polyline points="586.1,700.8 585.5,722.8"/>
<polyline points="602.2,701.4 601.6,723.1"/>
<polyline points="592.3,763.2 616.9,763.8"/>
<polyline points="567.4,777 616.6,777.8"/>
<polyline points="592.3,763.2 591.4,790.1"/>
<polyline points="602.5,777.8 602.2,790.1"/>
<polyline points="627.7,640.1 652.6,639.6"/>
<polyline points="627.7,653.9 652.6,653.6"/>
<polyline points="627.4,668.6 652.3,668"/>
<polyline points="627.4,682.3 652.3,682"/>
<polyline points="626.5,715.4 652,715.7"/>
<polyline points="626.2,728.6 652,728.9"/>
<polyline points="626,740.9 651.7,741.2"/>
<polyline points="625.7,753.5 651.7,753.8"/>
<polyline points="625.4,766.1 651.7,766.4"/>
<polyline points="625.1,778.4 651.4,778.7"/>
<polyline points="678.4,697.9 678.7,708.7"/>
<polyline points="655.8,753.5 701.8,749.1"/>
<polyline points="654.4,763.8 700.7,760.9"/>
<polyline points="653.8,773.2 700.4,771.1"/>
<polyline points="764.2,621.7 766.6,635.8"/>
<polyline points="767.8,684.7 770.7,692.9"/>
<polyline points="764.2,724.8 767.2,735.9"/>
<polyline points="772.4,722.8 775.4,733.6"/>
<polyline points="824,617.3 836.2,612.4"/>
<polyline points="824,631.9 841.6,626.5"/>
<polyline points="824,645.3 846,638"/>
<polyline points="843.5,612.4 856.9,607"/>
<polyline points="849.6,628.2 864.2,622.6"/>
<polyline points="861.8,614.8 876.4,608.7"/>
<polyline points="889.4,622.1 904,616"/>
<polyline points="895.5,638 910.6,632.4"/>
<polyline points="921.6,601.4 939.9,592.4"/>
<polyline points="927.7,613.6 947.2,603.9"/>
<polyline points="935,625.1 956.9,613.6"/>
<polyline points="942.3,636.3 965.5,623.4"/>
<polyline points="948.4,647.8 972.8,634.3"/>
<polyline points="922.8,665.6 943.5,656.3"/>
<polyline points="920.3,702.6 933.8,697"/>
<polyline points="926.4,719.2 940.6,712.9"/>
<polyline points="878.9,662.4 894.7,656.3"/>
<polyline points="885,678.2 900.1,672.1"/>
<polyline points="891.1,694.6 906.4,688"/>
<polyline points="897.2,710 912.3,703.9"/>
<polyline points="857.7,730.7 877.2,723.4"/>
<polyline points="867.9,756.3 886.9,748.2"/>
<polyline points="872.8,769 892.3,760"/>
<polyline points="877.7,780.7 897.2,772.1"/>
<polyline points="960.6,692.4 980.8,697"/>
<polyline points="951.6,730.7 971.6,738"/>
<polyline points="947.2,742.9 967.4,750.2"/>
</g>
<g class="gl">
<polyline points="221.1,259.5 408.6,267.7"/>
<polyline points="415.9,105.1 414.4,137.3 411.5,195.9 409.2,267.7 407.1,313.1 405.6,347.9 402.7,387.5 399.8,465.1 395.4,529.6 392.5,587.9"/>
<polyline points="452.5,105.1 453.4,122.6 455.4,131.4 454,135.8 445.8,136.4 446.7,146.1 451.1,181.2 458.4,207.6 470.1,234 487.7,260.3 498.5,280 533.7,335.1 540.7,339.7 561.8,362 626.5,432.9"/>
<polyline points="864,107 864,127.5 855.2,143.2 842.6,153.9 831.8,169.5 828.9,221.3 832.8,268 840.6,281.6 844.5,307 852.3,346.1 851.3,371.5 855.2,385.1 876.7,402.7 891.4,428.1 938.3,514.8 953.9,573.4 958.8,588.5"/>
<polyline points="969.5,107 969.5,131.4 980.2,205.7 995.9,299.2 1007.6,365.6 1019.3,427.9 1025.2,440"/>
<polyline points="402.7,387.6 473,378.2 524,373.8 541.6,371.4 550.4,372.9 562.1,362.6"/>
<polyline points="221.1,517.9 319.2,523.2 320.1,527.3 395.4,529.6"/>
<polyline points="626.5,433 642.7,421.2 726.1,493 746.7,512.1"/>
<polyline points="626.5,433 623.6,437.4 625.1,476.9 630.9,485.7 639.7,493 647,500.3"/>
<polyline points="792.1,556 825.8,558.4"/>
<polyline points="822,558.3 927.5,566.3 933.4,571.6 941.2,574.5 953.9,574.1 1025.2,554.6"/>
<polyline points="977.3,568.2 981.2,578.4 990,589.1"/>
<polyline points="393.3,588 389.5,675.9 384.5,790.1"/>
<polyline points="653.5,615.8 654.4,705.2 652.9,752.1 651.4,790.1"/>
<polyline points="958.1,586.8 970.3,600.2 977.7,608.7 994.7,644.1 1004.5,667.3 1004.5,680.7 994.7,729.5 980.1,767.3 972.8,790.4"/>
<polyline points="988.6,586.8 997.2,600.2 1009.4,627 1021.6,651.4 1026.4,661.2"/>
<polyline points="1026.4,707.5 1019.1,714.8 1010.6,718.5 1005.7,741.7 996,767.3 987.4,790.4"/>
</g>
<!--MAPEND-->
<defs><g id="mk"><rect x="0" y="0" width="9" height="10" fill="#e8e8e8" fill-opacity=".62"/><circle cx="2.8" cy="3" r="1.5" fill="#aaa"/><circle cx="6.3" cy="6.8" r="1.5" fill="#aaa"/><path d="M1 6l3 3.3h-3z" fill="#aaa"/><path d="M5.5 0v3.5h3.5" fill="none" stroke="#bbb" stroke-width=".8"/></g></defs>
<g id="marks"><use href="#mk" x="361.2" y="237.1"/><use href="#mk" x="566.0" y="237.1"/><use href="#mk" x="770.8" y="237.1"/><use href="#mk" x="975.4" y="237.1"/><use href="#mk" x="361.2" y="441.9"/><use href="#mk" x="566.0" y="441.9"/><use href="#mk" x="770.8" y="441.9"/><use href="#mk" x="975.4" y="441.9"/><use href="#mk" x="361.2" y="646.7"/><use href="#mk" x="566.0" y="646.7"/><use href="#mk" x="770.8" y="646.7"/><use href="#mk" x="975.4" y="646.7"/></g>
</svg>
</div>
<div class="abs" style="left:224px;top:110px;width:1px;height:678px;background:#c6c6c6"></div>
<!-- toolbar -->
<div class="tbg" style="left:232px;top:117px;width:58px;height:27px"></div>
<div class="tb" style="left:234.5px;top:119.5px;width:26px;height:22px"><svg width="26" height="22" viewBox="0 0 26 22"><path d="M8.2 2.5v13.5" stroke="#fff" stroke-width="1.4"/><text x="14" y="16.5" font-family="Liberation Sans,sans-serif" font-size="6" fill="#fff" font-weight="bold">М</text></svg></div>
<div class="tb" style="left:262px;top:119.5px;width:26px;height:22px"><svg width="26" height="22" viewBox="0 0 26 22"><path d="M6.5 3v14M3.2 6h11" stroke="#fff" stroke-width="1.4" fill="none"/><text x="11.5" y="17" font-family="Liberation Sans,sans-serif" font-size="6" fill="#fff" font-weight="bold">М²</text></svg></div>
<div class="tbg" style="left:292px;top:117px;width:58px;height:27px"></div>
<div class="tb" style="left:294.5px;top:119.5px;width:26px;height:22px"><svg width="26" height="22" viewBox="0 0 26 22"><path d="M9.5 4.5h6l1.5 1.5v2.5h-7.5z" fill="none" stroke="#fff" stroke-width="1.2"/><rect x="6.8" y="8.5" width="13" height="5.2" rx="1" fill="#fff"/><rect x="9.3" y="11.2" width="8" height="4.8" fill="#6c90c2" stroke="#fff" stroke-width="1.2"/></svg></div>
<div class="tb" style="left:322px;top:119.5px;width:26px;height:22px"><svg width="26" height="22" viewBox="0 0 26 22"><path d="M6 3.5l0 10 2.3-2.2 1.7 3.7 1.5-.7-1.7-3.6 3.2-.2z" fill="#fff"/><text x="14" y="18" font-family="Liberation Sans,sans-serif" font-size="9" fill="#fff" font-weight="bold">?</text></svg></div>
<div class="tbg" style="left:230.5px;top:151px;width:22px;height:40px"></div>
<div class="zb" style="left:233px;top:153.5px;width:17px;height:17.5px;border-radius:3px 3px 0 0;font-size:15px;line-height:16px">+</div>
<div class="zb" style="left:233px;top:171.5px;width:17px;height:17px;border-radius:0 0 3px 3px;font-size:14px;line-height:14px">-</div>
<!-- layers panel -->
<div id="layers">
 <div class="h">Шари</div>
 <svg class="abs" style="left:7px;top:7px" width="11" height="11" viewBox="0 0 11 11"><g fill="#fff"><circle cx="5.5" cy="5.5" r="3.6"/><g stroke="#fff" stroke-width="1.9"><path d="M5.5 0v11M0 5.500h11M1.600 1.600l7.800 7.800M9.400 1.600l-7.800 7.800"/></g></g><circle cx="5.500" cy="5.500" r="1.500" fill="#4a73a9"/></svg>
 <b style="top:33.500px">Базові шари</b>
 <i class="r on" style="top:48.500px"></i><span style="top:48.200px">Карта масштабу М 1:100000</span>
 <i class="r" style="top:64.500px"></i><span style="top:64.200px">Ортофотоплани</span>
 <b style="top:81px">Шари</b>
 <i class="c" style="top:95.5px"><svg width="10" height="10" viewBox="0 0 10 10"><path d="M1.800 4.200l1.900 2.600 3.400-5.400" fill="none" stroke="#3a4a9c" stroke-width="1.500"/></svg></i><span style="top:96.200px">Маркери</span>
 <i class="c" style="top:111px"></i><span style="top:111.700px">Грунти</span>
 <i class="c" style="top:126.700px"><svg width="10" height="10" viewBox="0 0 10 10"><path d="M1.800 4.200l1.900 2.600 3.400-5.400" fill="none" stroke="#3a4a9c" stroke-width="1.500"/></svg></i><span style="top:127.800px">Кадастровий поділ</span>
 <i class="c" style="top:142.300px"></i><span style="top:143.500px">АТУ</span>
 <i class="c" style="top:158px"><svg width="10" height="10" viewBox="0 0 10 10"><path d="M1.800 4.200l1.900 2.600 3.400-5.400" fill="none" stroke="#3a4a9c" stroke-width="1.500"/></svg></i><span style="top:158.800px">Обласні центри</span>
</div>
<!-- popup -->
<svg class="abs" style="left:500px;top:450px;z-index:3" width="60" height="48" viewBox="500 450 60 48"><path d="M512.400 454.900L521.800 494h25z" fill="#fff"/></svg>
<div id="popup">
 <div class="t">Ділянка</div>
 <svg class="abs" style="left:259px;top:12px" width="9" height="9" viewBox="0 0 9 9"><path d="M1 1l7 7M8 1l-7 7" stroke="#8c8c8c" stroke-width="1.300"/></svg>
 <div class="k" style="top:42.500px">Кадастр.номер:</div><div class="v" style="top:41.500px;font-weight:bold">3222482000:07:001:0080</div>
 <div class="k" style="top:54.500px">Цільове призначення:</div><div class="v" style="top:53.500px">присадибна</div>
 <div class="k" style="top:66.500px">Площа:</div><div class="v" style="top:65.500px">0.12 га</div>
</div>
<div id="scale">Масштаб = 1 : 8531</div>

<!-- taskbar -->
<div id="taskbar">
 <div class="abs" style="left:290px;top:13px;width:590px;height:10px;background:linear-gradient(90deg,rgba(130,136,133,0),rgba(130,136,133,.55) 8%,rgba(120,126,123,.5) 19%,rgba(30,34,32,.5) 21%,rgba(120,126,123,.5) 23%,rgba(135,140,138,.55) 28%,rgba(30,34,32,.5) 30%,rgba(125,130,128,.5) 32%,rgba(120,128,122,.45) 60%,rgba(110,120,112,.35) 85%,rgba(110,120,112,0));filter:blur(2.500px)"></div>
 <div class="abs" style="left:0;top:26px;width:1024px;height:8px;background:linear-gradient(90deg,rgba(50,70,40,.2),rgba(60,84,46,.55) 35%,rgba(56,78,44,.5) 70%,rgba(50,70,40,.25));filter:blur(2px)"></div>
 <div class="tbtn" style="left:47.500px"></div>
 <div class="tbtn on" style="left:147px"></div>
 <div class="tbtn" style="left:246.300px"></div>
 <svg class="abs" style="left:0;top:0" width="300" height="32" viewBox="0 788 300 32">
  <defs>
   <radialGradient id="orb" cx=".5" cy=".35" r=".75"><stop offset="0" stop-color="#7fc4f2"/><stop offset=".45" stop-color="#2b78c2"/><stop offset=".8" stop-color="#123f7e"/><stop offset="1" stop-color="#35b5e8"/></radialGradient>
   <radialGradient id="c1" cx=".4" cy=".3" r=".8"><stop offset="0" stop-color="#fff59a"/><stop offset=".5" stop-color="#ffd91e"/><stop offset="1" stop-color="#d89a00"/></radialGradient>
   <radialGradient id="ge" cx=".4" cy=".3" r=".8"><stop offset="0" stop-color="#5b84f0"/><stop offset=".55" stop-color="#1f3fc0"/><stop offset="1" stop-color="#0c1f7a"/></radialGradient>
   <radialGradient id="ffg" cx=".45" cy=".35" r=".7"><stop offset="0" stop-color="#4aa6e8"/><stop offset="1" stop-color="#1b4fa4"/></radialGradient>
  </defs>
  <circle cx="21.500" cy="804.300" r="14.800" fill="#0c1a2c" opacity=".7"/>
  <circle cx="21.500" cy="803.800" r="13.800" fill="url(#orb)"/>
  <path d="M14.800 798.200c2-1.200 4-1.200 5.800-.3l-1.200 5.200c-1.800-.9-3.800-.9-5.800.3z" fill="#e8632a"/>
  <path d="M21.800 798.300c1.800.9 3.800.9 5.800-.3l-1.200 5.200c-2 1.200-4 1.200-5.800.3z" fill="#7fbf3f"/>
  <path d="M13.300 804.500c2-1.200 4-1.200 5.800-.3l-1.200 5.200c-1.800-.9-3.800-.9-5.800.3z" fill="#3d8fe0"/>
  <path d="M20.300 804.600c1.800.9 3.800.9 5.800-.3l-1.200 5.200c-2 1.200-4 1.200-5.800.3z" fill="#f4c22b"/>
  <!-- explorer -->
  <path d="M59 797.500h9l1.500 1.800h14v15.500h-24.500z" fill="#e9c86a"/>
  <path d="M60 800h23v14h-23z" fill="#f7e3a0"/>
  <rect x="62" y="795.300" width="4" height="1.800" fill="#2fb24a"/><rect x="68.500" y="796.300" width="4" height="1.800" fill="#d9382c"/><rect x="74.500" y="797.800" width="4" height="1.800" fill="#3a8fe0"/>
  <path d="M62 806.500h19v9.500h-4v-5.500h-11v5.500h-4z" fill="#6fb7e6" stroke="#3f8fc8" stroke-width=".8"/>
  <!-- 1C -->
  <circle cx="120.500" cy="804" r="11.500" fill="url(#c1)"/>
  <text x="111" y="808.500" font-family="Liberation Sans,sans-serif" font-size="11.500" font-weight="bold" fill="#e3191b" letter-spacing="-.8">1С</text>
  <path d="M121 808.200h10" stroke="#e3191b" stroke-width="1.600"/>
  <!-- firefox -->
  <circle cx="170.500" cy="803.500" r="11.800" fill="url(#ffg)"/>
  <path d="M159 800c1-5 5-8.500 9.500-9-2 1.500-3 3-3 5 2-1 4-.5 5 1-2.500.5-3.500 2-3.500 4 0 3 2.500 4.500 5 4.500 3.500 0 6-2 6.500-6 .5-2.500-.5-5-2-7 3 2 5 6 5 10.500 0 6.500-5 12-11.500 12s-12-5-12-11.500c0-1.500.5-3 1-4.500z" fill="#f0701c"/>
  <path d="M180 795c1.500 2.500 2.500 5 2.500 8.500 0 6.500-5 12-11.500 12-3 0-6-1.200-8-3.200 3 1.500 7 1.500 10-.5 4-2.500 6.500-6.500 6-11-.2-2-.8-4-2-5.800z" fill="#fbc02a"/>
  <!-- chrome -->
  <circle cx="220.200" cy="803.800" r="11.500" fill="#e33b2e"/>
  <path d="M220.200 803.800l-10-5.700a11.500 11.500 0 0 0 4.600 15.800z" fill="#2fa84f"/>
  <path d="M220.200 803.800l-5.400 10.100a11.500 11.500 0 0 0 16.400-13.600h-11z" fill="#fbcf2a"/>
  <circle cx="220.200" cy="803.800" r="5.300" fill="#f2f2f2"/><circle cx="220.200" cy="803.800" r="4.200" fill="#3f84e0"/>
  <!-- google earth -->
  <circle cx="269.400" cy="803.500" r="12.500" fill="url(#ge)"/>
  <path d="M259.500 797.500c5-3.500 11-3 15 .5s5.500 7 6.500 9c-2-2.500-5-5.500-9-7s-8.500-1.500-12.500-2.500z" fill="#fff"/>
  <path d="M258 807c4-1.500 8-1.500 12-.3s6 2.800 8.500 3.800c-3-.3-6-.8-9.500-.8s-7 .5-9.500-.2z" fill="#fff"/>
  <path d="M261.500 812.500c3-.8 6-.8 9 0l4 1.300c-2 1.500-4.500 2.300-7 2.300-2.300-.5-4.500-1.800-6-3.600z" fill="#fff" opacity=".9"/>
 </svg>
 <div class="abs" style="left:853px;top:12px;font-size:9px;line-height:1;color:#d2d2d2">RU</div>
 <svg class="abs" style="left:875px;top:9px" width="75" height="16" viewBox="875 797 75 16"><path d="M878 806.500h6.500l-3.250-3.500z" fill="#e8e8e8"/><path d="M895.800 799v11.500" stroke="#eee" stroke-width="1.200"/><path d="M896.500 799.500c2-.8 3.500 0 5 .5s3 .5 5-.5c-1 1.500-1.500 3-1.500 4.500-1.500 1-3 1-4.500.5s-2.500-.5-4 .2z" fill="#eee"/><rect x="917" y="801.500" width="8.500" height="6" fill="none" stroke="#eee" stroke-width="1.200"/><path d="M915.500 799.500v8M913.800 801h3.500M918.500 810h5.500" stroke="#eee" stroke-width="1.200"/><path d="M933 803h2.500l3.500-3v10l-3.500-3h-2.500z" fill="#eee"/><path d="M940.500 802.500c1 1.500 1 3.500 0 5M942.300 801c1.800 2.500 1.800 5.500 0 8" fill="none" stroke="#ddd" stroke-width=".9"/></svg>
 <div class="abs" style="left:960px;top:6px;width:43px;text-align:center;line-height:1;font-size:8.600px">13:27</div>
 <div class="abs" style="left:956px;top:19px;width:51px;text-align:center;line-height:1;font-size:8.600px">06.05.2014</div>
 <div class="abs" style="left:1013px;top:0;width:12px;height:31px;border:1px solid rgba(255,255,255,.35);background:linear-gradient(rgba(255,255,255,.16),rgba(255,255,255,.03))"></div>
</div>
</body>
</html>
